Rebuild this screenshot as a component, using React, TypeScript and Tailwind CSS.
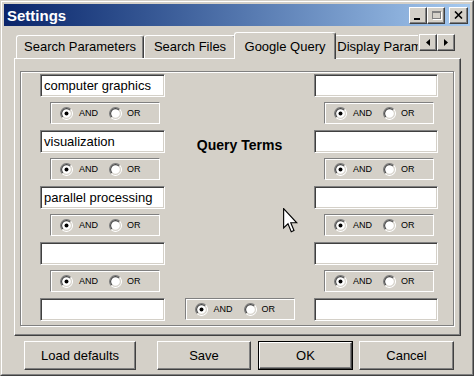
import React from "react";

const font = "font-['Liberation_Sans',Arial,sans-serif]";

function Radio({ checked }: { checked?: boolean }) {
  return (
    <svg width="13" height="13" viewBox="0 0 12 12" className="shrink-0">
      <circle cx="6" cy="6" r="5" fill="white" />
      <path d="M2.1 9.9 A5.5 5.5 0 0 1 9.9 2.1" stroke="#808080" strokeWidth="1" fill="none" />
      <path d="M2.8 9.2 A4.5 4.5 0 0 1 9.2 2.8" stroke="#404040" strokeWidth="1" fill="none" />
      <path d="M9.9 2.1 A5.5 5.5 0 0 1 2.1 9.9" stroke="#ffffff" strokeWidth="1" fill="none" />
      <path d="M9.2 2.8 A4.5 4.5 0 0 1 2.8 9.2" stroke="#d4d0c8" strokeWidth="1" fill="none" />
      {checked && <circle cx="6" cy="6" r="1.8" fill="black" />}
    </svg>
  );
}

function AndOr() {
  return (
    <div className="w-[110px] h-[22px] flex items-center pl-[9px] border border-t-[#808080] border-l-[#808080] border-r-white border-b-white shadow-[inset_1px_1px_0_white]">
      <Radio checked />
      <span className="ml-[6px] text-[9px] leading-none text-black">AND</span>
      <span className="ml-[11px]">
        <Radio />
      </span>
      <span className="ml-[5px] text-[9px] leading-none text-black">OR</span>
    </div>
  );
}

function Field({ value, w }: { value?: string; w: string }) {
  return (
    <div
      className={`${w} h-[23px] bg-white flex items-center pl-[3px] text-[13px] text-black border border-t-[#808080] border-l-[#808080] border-r-white border-b-white shadow-[inset_1px_1px_0_#404040,inset_-1px_-1px_0_#d4d0c8]`}
    >
      {value}
    </div>
  );
}

function Column({ values, w }: { values: string[]; w: string }) {
  return (
    <div className="flex flex-col">
      {values.map((v, i) => (
        <div key={i} className={i > 0 ? "mt-[6px]" : ""}>
          <Field value={v} w={w} />
          {i < values.length - 1 && (
            <div className="mt-[5px] ml-[10px]">
              <AndOr />
            </div>
          )}
        </div>
      ))}
    </div>
  );
}

function Btn({ label, w, def }: { label: string; w: string; def?: boolean }) {
  const bevel =
    "flex-1 flex items-center justify-center border border-t-white border-l-white border-r-[#404040] border-b-[#404040] shadow-[inset_-1px_-1px_0_#808080]";
  if (def) {
    return (
      <div className={`${w} h-[29px] flex border border-black`}>
        <div className={bevel}>{label}</div>
      </div>
    );
  }
  return (
    <div className={`${w} h-[29px] flex`}>
      <div className={bevel}>{label}</div>
    </div>
  );
}

function Tab({ label, w, selected }: { label: string; w: string; selected?: boolean }) {
  if (selected) {
    return (
      <div
        className={`${w} relative z-10 -mx-[2px] h-[27px] self-end bg-[#d4d0c8] flex items-start justify-center pt-[4px] rounded-t-[3px] border-l border-t border-white border-r border-r-[#404040] shadow-[inset_-1px_0_0_#808080] whitespace-nowrap`}
      >
        {label}
      </div>
    );
  }
  return (
    <div
      className={`${w} shrink-0 h-[23px] mb-[1px] self-end flex items-center justify-center rounded-t-[3px] border-l border-t border-white border-r border-r-[#404040] shadow-[inset_-1px_0_0_#808080] whitespace-nowrap overflow-hidden`}
    >
      {label}
    </div>
  );
}

function SmallBtn({ children, w }: { children: React.ReactNode; w: string }) {
  return (
    <div
      className={`${w} h-[17px] bg-[#d4d0c8] flex items-center justify-center border border-t-white border-l-white border-r-[#404040] border-b-[#404040] shadow-[inset_-1px_-1px_0_#808080]`}
    >
      {children}
    </div>
  );
}

export default function App() {
  return (
    <div className={`${font} relative w-[474px] h-[376px] overflow-hidden bg-[#d4d0c8] border border-t-[#d4d0c8] border-l-[#d4d0c8] border-r-[#404040] border-b-[#404040]`}>
      <div className="h-full border border-t-white border-l-white border-r-[#808080] border-b-[#808080] p-[2px] flex flex-col">
        {/* title bar */}
        <div className="h-[22px] flex items-center bg-linear-to-r from-[#0a246a] to-[#a6caf0] pl-[3px] pr-[2px]">
          <span className="text-white font-bold text-[15px] leading-none">Settings</span>
          <div className="ml-auto flex items-center">
            <SmallBtn w="w-[18px]">
              <div className="w-[6px] h-[2px] bg-black mt-[7px] -ml-[3px]" />
            </SmallBtn>
            <SmallBtn w="w-[18px]">
              <div className="w-[9px] h-[8px] border border-t-2 border-[#808080] shadow-[1px_1px_0_white]" />
            </SmallBtn>
            <div className="ml-[4px]">
              <SmallBtn w="w-[19px]">
                <svg width="9" height="8" viewBox="0 0 9 8">
                  <path d="M1 0.5 L8 7.5 M8 0.5 L1 7.5" stroke="black" strokeWidth="1.6" />
                </svg>
              </SmallBtn>
            </div>
          </div>
        </div>

        {/* tab strip */}
        <div className="mt-[6px] h-[27px] -mb-[1px] relative z-10 flex text-[13px] text-black">
          <div className="ml-[12px] w-[402px] flex">
            <Tab label="Search Parameters" w="w-[128px]" />
            <Tab label="Search Files" w="w-[92px]" />
            <Tab label="Google Query" w="w-[102px]" selected />
            <div className="flex-1 overflow-hidden flex">
              <Tab label="Display Parameters" w="w-[120px]" />
            </div>
          </div>
          <div className="ml-[1px] mt-[2px] flex">
            <SmallBtn w="w-[18px]">
              <svg width="4" height="7" viewBox="0 0 4 7">
                <path d="M4 0 L0 3.5 L4 7 Z" fill="black" />
              </svg>
            </SmallBtn>
            <SmallBtn w="w-[18px]">
              <svg width="4" height="7" viewBox="0 0 4 7">
                <path d="M0 0 L4 3.5 L0 7 Z" fill="black" />
              </svg>
            </SmallBtn>
          </div>
        </div>

        {/* tab panel */}
        <div className="ml-[10px] w-[447px] h-[278px] border-l border-t border-white border-r border-b border-r-[#404040] border-b-[#404040] shadow-[inset_-1px_-1px_0_#808080] pt-[12px] pl-[5px]">
          <div className="w-[434px] h-[255px] border border-[#808080] shadow-[inset_1px_1px_0_white,1px_1px_0_white] pl-[19px] pr-[15px] pt-[2px] flex">
            <Column
              w="w-[125px]"
              values={["computer graphics", "visualization", "parallel processing", "", ""]}
            />
            <div className="flex-1 flex flex-col items-center">
              <div className="mt-[63px] font-bold text-[14px] leading-[16px] text-black">Query Terms</div>
              <div className="mt-auto mb-[5px]">
                <AndOr />
              </div>
            </div>
            <Column w="w-[124px]" values={["", "", "", "", ""]} />
          </div>
        </div>

        {/* buttons */}
        <div className="mt-[5px] flex text-[13px] text-black pl-[20px]">
          <Btn label="Load defaults" w="w-[112px]" />
          <div className="ml-[21px]">
            <Btn label="Save" w="w-[94px]" />
          </div>
          <div className="ml-[7px]">
            <Btn label="OK" w="w-[95px]" def />
          </div>
          <div className="ml-[6px]">
            <Btn label="Cancel" w="w-[95px]" />
          </div>
        </div>
      </div>

      {/* mouse pointer */}
      <svg
        className="absolute left-[282px] top-[207px]"
        width="15"
        height="25"
        viewBox="0 0 12 20"
      >
        <path
          d="M0.5 0.5 L0.5 16 L4 12.6 L6.6 19 L8.8 18 L6.2 11.8 L11 11.8 Z"
          fill="white"
          stroke="black"
          strokeWidth="0.9"
          strokeLinejoin="miter"
        />
      </svg>
    </div>
  );
}
